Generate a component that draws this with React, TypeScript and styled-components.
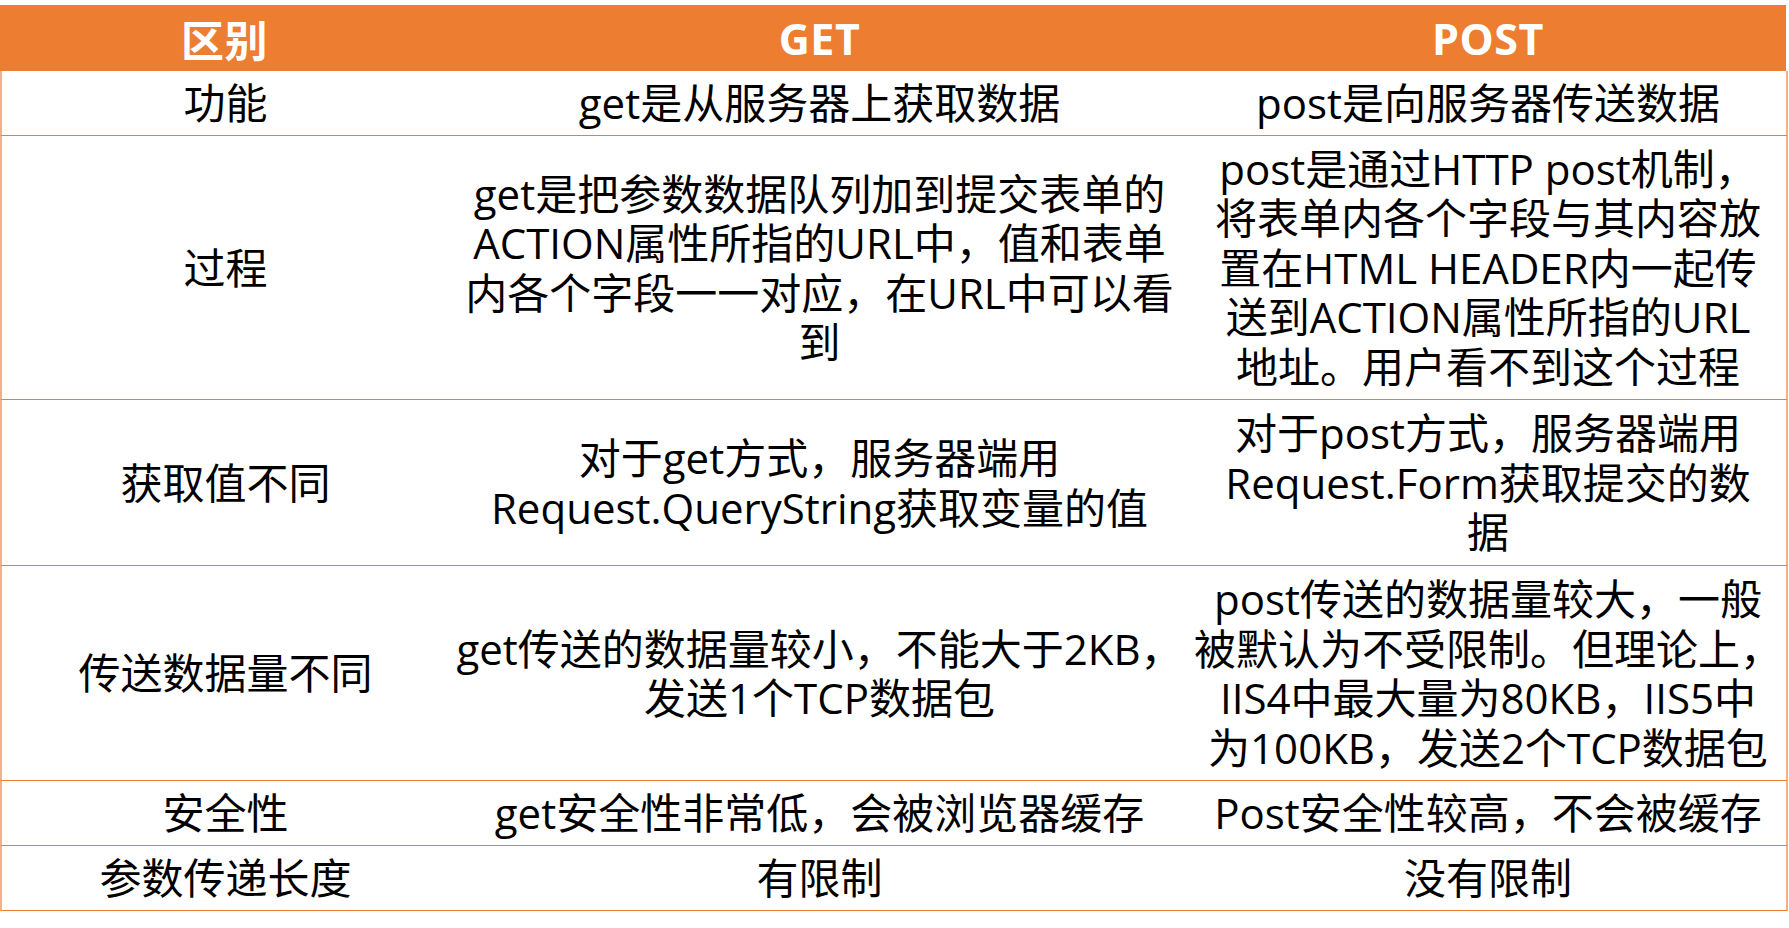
import styled, { createGlobalStyle } from 'styled-components'

const Orange = '#ED7D31'
const OrangeLight = '#F4B183'

type RowData = {
  label: string
  height: number
  get: string[]
  post: string[]
}

const rows: RowData[] = [
  { label: '功能', height: 65, get: ['get是从服务器上获取数据'], post: ['post是向服务器传送数据'] },
  {
    label: '过程',
    height: 264,
    get: ['get是把参数数据队列加到提交表单的', 'ACTION属性所指的URL中，值和表单', '内各个字段一一对应，在URL中可以看', '到'],
    post: [
      'post是通过HTTP post机制，',
      '将表单内各个字段与其内容放',
      '置在HTML HEADER内一起传',
      '送到ACTION属性所指的URL',
      '地址。用户看不到这个过程',
    ],
  },
  {
    label: '获取值不同',
    height: 166,
    get: ['对于get方式，服务器端用', 'Request.QueryString获取变量的值'],
    post: ['对于post方式，服务器端用', 'Request.Form获取提交的数', '据'],
  },
  {
    label: '传送数据量不同',
    height: 215,
    get: ['get传送的数据量较小，不能大于2KB，', '发送1个TCP数据包'],
    post: ['post传送的数据量较大，一般', '被默认为不受限制。但理论上，', 'IIS4中最大量为80KB，IIS5中', '为100KB，发送2个TCP数据包'],
  },
  { label: '安全性', height: 65, get: ['get安全性非常低，会被浏览器缓存'], post: ['Post安全性较高，不会被缓存'] },
  { label: '参数传递长度', height: 65, get: ['有限制'], post: ['没有限制'] },
]

const GlobalStyle = createGlobalStyle`
  html, body {
    margin: 0;
    padding: 0;
    background: #ffffff;
  }
  body {
    font-family: "Open Sans", "Noto Sans CJK SC", sans-serif;
    color: #000000;
  }
`

const Page = styled.div`
  width: 1789px;
  padding-top: 5px;
`

const Table = styled.div`
  display: flex;
  flex-direction: column;
  width: 1788px;
`

const HeaderRow = styled.div`
  display: grid;
  grid-template-columns: 449px 741px 596px;
  width: 1786px;
  height: 66px;
  background: ${Orange};
`

const HeadCell = styled.div`
  display: flex;
  align-items: center;
  justify-content: center;
  font-size: 43px;
  font-weight: 700;
  color: #ffffff;
  letter-spacing: 0.5px;
`

const Row = styled.div<{ $height: number }>`
  display: grid;
  grid-template-columns: 447px 741px 596px;
  box-sizing: border-box;
  height: ${(p) => p.$height}px;
  border-left: 2px solid ${OrangeLight};
  border-right: 2px solid ${OrangeLight};
  border-bottom: 1px solid ${Orange};
`

const Cell = styled.div`
  display: flex;
  align-items: center;
  justify-content: center;
  font-size: 42px;
  line-height: 49.5px;
  text-align: center;
  white-space: pre;
`

export default function App() {
  return (
    <Page>
      <GlobalStyle />
      <Table>
        <HeaderRow>
          <HeadCell>区别</HeadCell>
          <HeadCell>GET</HeadCell>
          <HeadCell>POST</HeadCell>
        </HeaderRow>
        {rows.map((r) => (
          <Row key={r.label} $height={r.height}>
            <Cell>{r.label}</Cell>
            <Cell>{r.get.join('\n')}</Cell>
            <Cell>{r.post.join('\n')}</Cell>
          </Row>
        ))}
      </Table>
    </Page>
  )
}
